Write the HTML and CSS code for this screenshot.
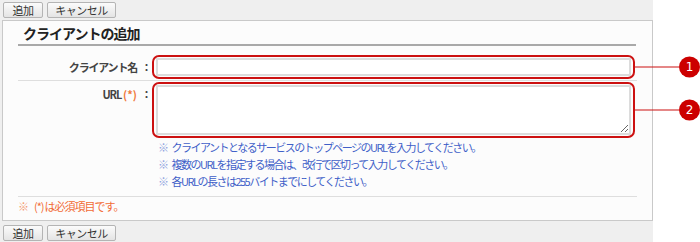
FILE: index.html
```html
<!DOCTYPE html>
<html lang="ja">
<head>
<meta charset="utf-8">
<title>クライアントの追加</title>
<link rel="stylesheet" href="styles.css">
</head>
<body>
<div class="page">
  <div class="btnbar">
    <button class="btn btn-add">追加</button>
    <button class="btn btn-cancel">キャンセル</button>
  </div>
  <div class="panel">
    <h2 class="heading">クライアントの追加</h2>
    <div class="row row-name">
      <div class="label">クライアント名<span class="colon">：</span></div>
      <div class="field">
        <div class="ring">
          <input class="input" type="text">
          <span class="callout"><span class="line"></span><span class="badge">1</span></span>
        </div>
      </div>
    </div>
    <div class="row row-url">
      <div class="label label-top">URL<span class="req">(*)</span><span class="colon">：</span></div>
      <div class="field">
        <div class="ring">
          <textarea class="textarea"></textarea>
          <span class="callout"><span class="line"></span><span class="badge">2</span></span>
        </div>
        <ul class="notes">
          <li><span class="mark">※</span>クライアントとなるサービスのトップページのURLを入力してください。</li>
          <li><span class="mark">※</span>複数のURLを指定する場合は、改行で区切って入力してください。</li>
          <li><span class="mark">※</span>各URLの長さは255バイトまでにしてください。</li>
        </ul>
      </div>
    </div>
    <div class="required"><span class="rmark">※</span><span class="rreq">(*)</span>は必須項目です。</div>
  </div>
  <div class="btnbar btnbar-bottom">
    <button class="btn btn-add">追加</button>
    <button class="btn btn-cancel">キャンセル</button>
  </div>
</div>
</body>
</html>
```

FILE: styles.css
```css
html, body {
  margin: 0;
  padding: 0;
  background: #ffffff;
}
body {
  font-family: "Noto Sans CJK JP", "Noto Sans", sans-serif;
  color: #333;
}
.page {
  width: 653px;
  height: 242px;
  background: #efefef;
  box-sizing: border-box;
  padding-top: 2px;
}
.btnbar {
  display: flex;
  gap: 4px;
  padding-left: 3px;
  height: 16px;
}
.btnbar-bottom {
  margin-top: 4px;
}
.btn {
  height: 16px;
  box-sizing: border-box;
  border: 1px solid #b4b4b4;
  border-radius: 2px;
  background: linear-gradient(#fbfbfb, #e4e4e4);
  font-family: "Noto Sans CJK JP", sans-serif;
  font-size: 11px;
  line-height: 13px;
  color: #333;
  padding: 0;
  letter-spacing: -0.5px;
}
.btn-add { width: 40px; }
.btn-cancel { width: 69px; }
.panel {
  margin: 2px 0 0 2px;
  width: 651px;
  box-sizing: border-box;
  border: 1px solid #c9c9c9;
  background: #fcfcfc;
  padding: 0 15px;
}
.heading {
  margin: 0;
  padding: 4px 5px 2px;
  font-size: 14px;
  line-height: 17px;
  font-weight: bold;
  color: #222;
  letter-spacing: -1px;
  border-bottom: 2px solid #a9a9a9;
  margin-right: 1px;
}
.row {
  display: flex;
  border-bottom: 1px solid #dedede;
}
.row-name {
  padding: 9px 0 1px;
}
.row-url {
  padding: 1px 0 6px;
}
.label {
  width: 134px;
  flex: none;
  text-align: right;
  font-size: 11px;
  font-weight: bold;
  color: #444;
  letter-spacing: -1.2px;
  line-height: 24px;
}
.colon {
  margin-left: 4px;
  letter-spacing: 0;
}
.label-top {
  padding-top: 4px;
  line-height: 16px;
}
.req {
  color: #f07a3c;
  font-weight: bold;
  letter-spacing: 0;
  margin-left: 2px;
}
.field {
  flex: none;
  width: 483px;
}
.ring {
  position: relative;
  border: 2px solid #cc1111;
  border-radius: 7px;
  padding: 1px 2px;
  display: flex;
}
.input {
  width: 475px;
  height: 18px;
  box-sizing: border-box;
  border: 2px solid #dcdcdc;
  background: #fff;
  margin: 0;
  padding: 0 2px;
}
.textarea {
  width: 475px;
  height: 50px;
  box-sizing: border-box;
  border: 2px solid #dcdcdc;
  background: #fff;
  margin: 0;
  padding: 0 2px;
  display: block;
}
.callout {
  position: absolute;
  left: 100%;
  top: 50%;
  margin-left: 2px;
  display: flex;
  align-items: center;
  transform: translateY(-50%);
}
.line {
  width: 44px;
  height: 1px;
  background: #cc1111;
}
.badge {
  width: 21px;
  height: 21px;
  border-radius: 50%;
  background: #cc0000;
  color: #fff;
  font-family: "DejaVu Sans", sans-serif;
  font-size: 12px;
  line-height: 21px;
  text-align: center;
}
.notes {
  list-style: none;
  margin: 1px 0 0;
  padding: 0 0 0 6px;
  font-size: 11px;
  line-height: 17px;
  color: #3f5fc8;
  letter-spacing: -1.5px;
}
.mark {
  color: #8fa3e0;
  margin-right: 4px;
}
.required {
  padding: 1px 0 6px;
  font-size: 11px;
  line-height: 16px;
  color: #f26b35;
  letter-spacing: -1px;
}
.rmark {
  margin-right: 6px;
  color: #f59a70;
}
.rreq {
  margin-right: 1px;
}
```
